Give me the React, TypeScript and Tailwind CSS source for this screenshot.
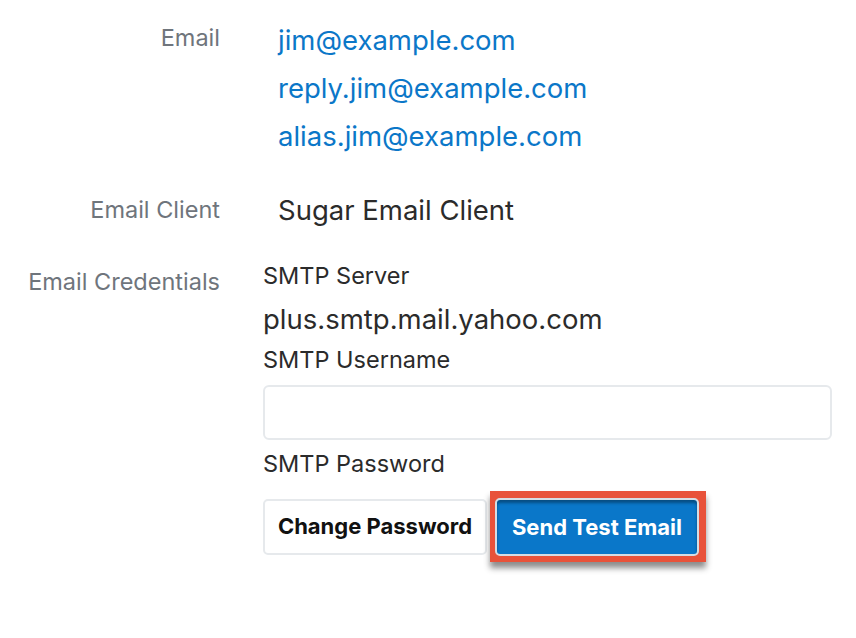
import React from "react";

const labelCls = "w-[220px] shrink-0 text-right text-[23.5px] text-[#6f757c]";

const App = () => {
  return (
    <div className="w-[856px] h-[638px] bg-white font-['Inter','Noto_Sans',sans-serif] antialiased">
      <div className="flex flex-col pt-[22px]">
        {/* Email */}
        <div className="flex items-start">
          <div className={`${labelCls} leading-[32px]`}>Email</div>
          <div className="flex flex-col pl-[58px] text-[27.5px] leading-[48px] text-[#0b77c8] -mt-[6px]">
            <a href="#">jim@example.com</a>
            <a href="#">reply.jim@example.com</a>
            <a href="#">alias.jim@example.com</a>
          </div>
        </div>

        {/* Email Client */}
        <div className="flex items-center mt-[34px]">
          <div className={`${labelCls} leading-[32px]`}>Email Client</div>
          <div className="pl-[58px] text-[27.5px] leading-[32px] text-[#2b2b2b]">
            Sugar Email Client
          </div>
        </div>

        {/* Email Credentials */}
        <div className="flex items-start mt-[44px]">
          <div className={`${labelCls} leading-[32px] mt-[-4px]`}>Email Credentials</div>
          <div className="flex flex-col pl-[43px] flex-1 pr-[24px]">
            <div className="text-[23.5px] leading-[28px] text-[#2b2b2b] -mt-[8px]">SMTP Server</div>
            <div className="text-[27.5px] leading-[32px] text-[#2b2b2b] mt-[13px]">
              plus.smtp.mail.yahoo.com
            </div>
            <div className="text-[23.5px] leading-[28px] text-[#2b2b2b] mt-[11px]">SMTP Username</div>
            <input
              type="text"
              className="mt-[11px] h-[55px] w-full rounded-[6px] border-2 border-[#e6e9ec] bg-white px-3 outline-none"
            />
            <div className="text-[23.5px] leading-[28px] text-[#2b2b2b] mt-[10px]">SMTP Password</div>
            <div className="flex items-center mt-[13px]">
              <button
                type="button"
                className="h-[56px] w-[224px] rounded-[5px] border-2 border-[#e6e9ec] bg-white text-[22px] font-bold text-[#111]"
              >
                Change Password
              </button>
              <div className="ml-[3px] pt-[7px] pb-[6px] pl-[5px] pr-[7px] bg-[#e8523a] shadow-[0_6px_6px_rgba(0,0,0,0.45)]">
                <button
                  type="button"
                  className="h-[58px] w-[204px] rounded-[5px] border-[2px] border-[#d5dde4] bg-[#0a77c9] text-[22px] font-bold text-white shadow-[inset_0_3px_3px_rgba(0,0,0,0.35)]"
                >
                  Send Test Email
                </button>
              </div>
            </div>
          </div>
        </div>
      </div>
    </div>
  );
};

export default App;
